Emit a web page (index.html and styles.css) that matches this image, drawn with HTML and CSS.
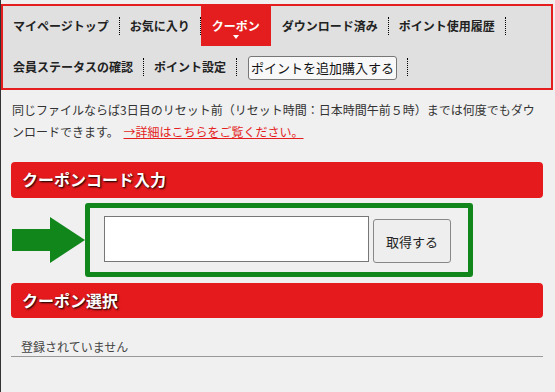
FILE: index.html
```html
<!DOCTYPE html>
<html lang="ja">
<head>
    <meta charset="UTF-8">
    <title>クーポン</title>
    <link rel="stylesheet" href="styles.css">
</head>
<body>
    <div class="page">
        <div class="mypage-nav">
            <ul>
                <li><a href="#">マイページトップ</a></li>
                <li><a href="#">お気に入り</a></li>
                <li class="active"><a href="#">クーポン</a></li>
                <li><a href="#">ダウンロード済み</a></li>
                <li><a href="#">ポイント使用履歴</a></li>
                <li><a href="#">会員ステータスの確認</a></li>
                <li><a href="#">ポイント設定</a></li>
                <li><span class="nav-btn-wrap"><button class="nav-btn">ポイントを追加購入する</button></span></li>
            </ul>
        </div>

        <div class="main-content">
            <p class="notice">
                同じファイルならば3日目のリセット前（リセット時間：日本時間午前５時）までは何度でもダウンロードできます。
                <a href="#">→詳細はこちらをご覧ください。</a>
            </p>

            <h2 class="section-title">クーポンコード入力</h2>

            <div class="coupon-row">
                <svg class="arrow" width="74" height="72" viewBox="0 0 74 72">
                    <rect x="1" y="25" width="39" height="22" fill="#10861b"/>
                    <polygon points="39,13 74,36 39,59" fill="#10861b"/>
                </svg>
                <div class="coupon-box">
                    <input type="text" class="coupon-input">
                    <button class="coupon-btn">取得する</button>
                </div>
            </div>

            <h2 class="section-title second">クーポン選択</h2>

            <div class="empty-row">登録されていません</div>
        </div>
    </div>
</body>
</html>
```

FILE: styles.css
```css
body {
    margin: 0;
    padding: 0;
    background-color: #f0f0f0;
    font-family: "Noto Sans CJK JP", "Noto Sans", sans-serif;
    color: #333;
}
.page {
    border-left: 1px solid #333;
    min-height: 392px;
    box-sizing: border-box;
    padding-top: 4px;
}
.mypage-nav {
    margin: 0 2px 0 0;
    border: 2px solid #e41e1e;
    background-color: #e0e0e0;
}
.mypage-nav ul {
    list-style: none;
    margin: 0;
    padding: 0 0 1px 0;
    display: flex;
    flex-wrap: wrap;
    row-gap: 1px;
}
.mypage-nav li {
    display: flex;
    align-items: center;
    height: 40px;
}
.mypage-nav li::after {
    content: "";
    height: 18px;
    border-left: 1px dotted #000;
}
.mypage-nav li:nth-child(5) {
    margin-right: 40px;
}
.mypage-nav a {
    display: block;
    padding: 0 10px;
    line-height: 40px;
    font-size: 12px;
    font-weight: bold;
    color: #222;
    text-decoration: none;
}
.mypage-nav li.active a {
    position: relative;
    background-color: #e41e1e;
    color: #fff;
    padding: 0 11px 0 11px;
}
.mypage-nav li.active a::after {
    content: "";
    position: absolute;
    left: 50%;
    bottom: 7px;
    margin-left: -3px;
    border-left: 3px solid transparent;
    border-right: 3px solid transparent;
    border-top: 4px solid #fff;
}
.mypage-nav li.active::after {
    border-left-color: transparent;
}
.nav-btn-wrap {
    padding: 0 10px 0 11px;
}
.nav-btn {
    height: 24px;
    padding: 0 2px;
    font-family: "Noto Sans CJK JP", sans-serif;
    font-size: 13px;
    color: #111;
    background-color: #f8f8f8;
    border: 1px solid #777;
    border-radius: 3px;
}
.main-content {
    padding: 0 12px 0 10px;
}
.notice {
    margin: 9px 0 19px 1px;
    font-size: 12px;
    line-height: 22px;
    color: #333;
}
.notice a {
    color: #e41e1e;
    margin-left: 2px;
}
.section-title {
    margin: 0;
    height: 36px;
    line-height: 35px;
    padding-left: 11px;
    background-color: #e41a1c;
    border-radius: 4px;
    color: #fff;
    font-size: 16px;
    font-weight: bold;
    text-shadow: 1px 1px 2px #000;
}
.section-title.second {
    margin-top: 6px;
    height: 35px;
}
.coupon-row {
    display: flex;
    align-items: center;
    margin-top: 5px;
}
.arrow {
    display: block;
}
.coupon-box {
    display: flex;
    align-items: center;
    gap: 4px;
    border: 5px solid #10861b;
    border-radius: 3px;
    padding: 8px 17px 8px 14px;
}
.coupon-input {
    width: 265px;
    height: 46px;
    box-sizing: border-box;
    border: 1px solid #777;
    background: #fff;
    margin: 0 0 2px 0;
}
.coupon-btn {
    width: 78px;
    height: 44px;
    margin-top: 2px;
    font-family: "Noto Sans CJK JP", sans-serif;
    font-size: 13px;
    color: #222;
    background-color: #eee;
    border: 1px solid #888;
    border-radius: 3px;
}
.empty-row {
    margin-top: 20px;
    padding: 0 10px;
    font-size: 12px;
    line-height: 18px;
    color: #444;
    border-bottom: 1px solid #999;
}
```
